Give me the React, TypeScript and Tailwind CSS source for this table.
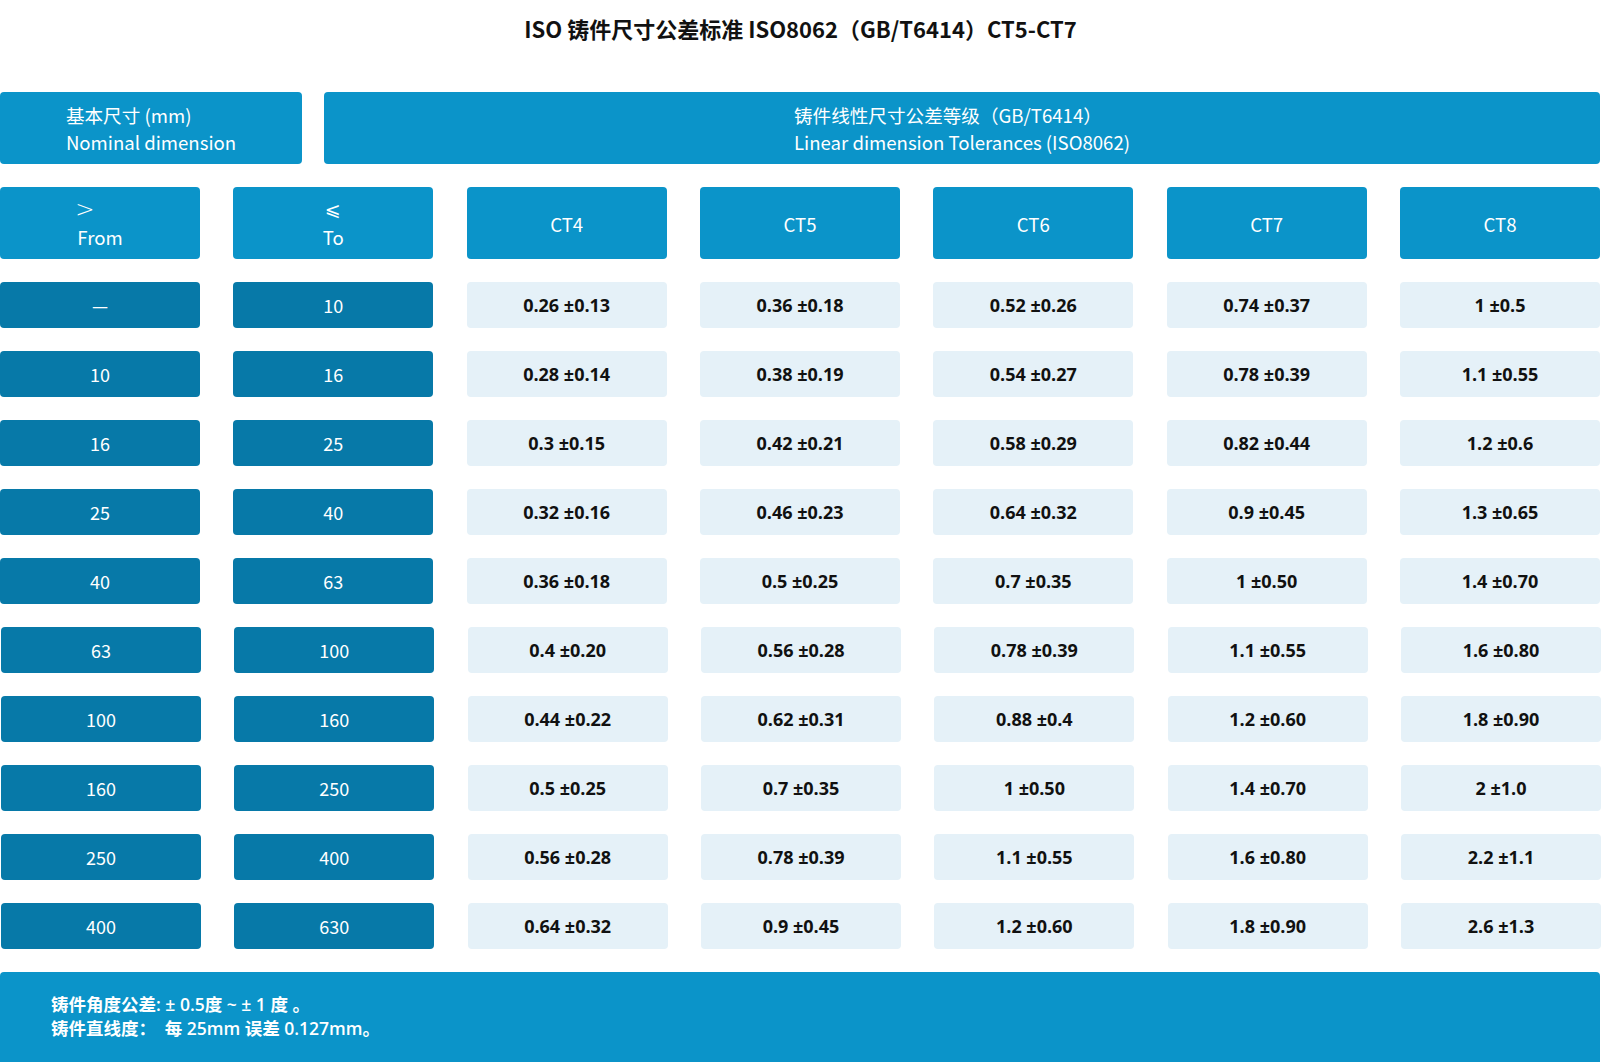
import React from "react";

const rows: [string, string, string[]][] = [
  ["—", "10", ["0.26 ±0.13", "0.36 ±0.18", "0.52 ±0.26", "0.74 ±0.37", "1 ±0.5"]],
  ["10", "16", ["0.28 ±0.14", "0.38 ±0.19", "0.54 ±0.27", "0.78 ±0.39", "1.1 ±0.55"]],
  ["16", "25", ["0.3 ±0.15", "0.42 ±0.21", "0.58 ±0.29", "0.82 ±0.44", "1.2 ±0.6"]],
  ["25", "40", ["0.32 ±0.16", "0.46 ±0.23", "0.64 ±0.32", "0.9 ±0.45", "1.3 ±0.65"]],
  ["40", "63", ["0.36 ±0.18", "0.5 ±0.25", "0.7 ±0.35", "1 ±0.50", "1.4 ±0.70"]],
  ["63", "100", ["0.4 ±0.20", "0.56 ±0.28", "0.78 ±0.39", "1.1 ±0.55", "1.6 ±0.80"]],
  ["100", "160", ["0.44 ±0.22", "0.62 ±0.31", "0.88 ±0.4", "1.2 ±0.60", "1.8 ±0.90"]],
  ["160", "250", ["0.5 ±0.25", "0.7 ±0.35", "1 ±0.50", "1.4 ±0.70", "2 ±1.0"]],
  ["250", "400", ["0.56 ±0.28", "0.78 ±0.39", "1.1 ±0.55", "1.6 ±0.80", "2.2 ±1.1"]],
  ["400", "630", ["0.64 ±0.32", "0.9 ±0.45", "1.2 ±0.60", "1.8 ±0.90", "2.6 ±1.3"]],
];

export default function App() {
  return (
    <div className="w-[1601px] h-[1062px] overflow-hidden bg-white font-['Noto_Sans_CJK_SC',sans-serif]">
      <h1 className="h-[56px] flex items-center justify-center text-[22px] font-bold text-[#111]">
        ISO 铸件尺寸公差标准 ISO8062（GB/T6414）CT5-CT7
      </h1>

      <div className="mt-[36px] w-[1600px] flex gap-[22px] h-[72px] text-white text-[18.6px] leading-[27px]">
        <div className="w-[302px] rounded bg-[#0b94c9] flex items-center justify-center">
          <div className="text-left">
            <div>基本尺寸 (mm)</div>
            <div>Nominal dimension</div>
          </div>
        </div>
        <div className="flex-1 rounded bg-[#0b94c9] flex items-center justify-center">
          <div className="text-left">
            <div>铸件线性尺寸公差等级（GB/T6414）</div>
            <div>Linear dimension Tolerances (ISO8062)</div>
          </div>
        </div>
      </div>

      <div className="mt-[23px] w-[1600px] grid grid-cols-7 gap-x-[33.33px] h-[72px] text-white text-[18.6px] leading-[27px]">
        <div className="rounded bg-[#0b94c9] flex items-center justify-center">
          <div className="text-left">
            <div className="font-['DejaVu_Sans',sans-serif] font-extralight text-[23px] leading-[27px] -ml-[2px]">&gt;</div>
            <div>From</div>
          </div>
        </div>
        <div className="rounded bg-[#0b94c9] flex items-center justify-center">
          <div className="text-left">
            <div className="font-['DejaVu_Sans',sans-serif] text-[19px] leading-[27px] pl-[2px]">⩽</div>
            <div>To</div>
          </div>
        </div>
        {["CT4", "CT5", "CT6", "CT7", "CT8"].map((c) => (
          <div key={c} className="rounded bg-[#0b94c9] flex items-center justify-center">
            {c}
          </div>
        ))}
      </div>

      <div className="mt-[23px] flex flex-col gap-[23px]">
        {rows.map(([from, to, vals], i) => (
          <div
            key={i}
            className={
              "w-[1600px] grid grid-cols-7 gap-x-[33.33px] h-[46px] " +
              (i >= 5 ? "ml-px" : "")
            }
          >
            <div className="rounded bg-[#0779a8] text-white text-[18px] flex items-center justify-center">
              {from}
            </div>
            <div className="rounded bg-[#0779a8] text-white text-[18px] flex items-center justify-center">
              {to}
            </div>
            {vals.map((v, j) => (
              <div
                key={j}
                className="rounded bg-[#e5f1f8] text-[#111] text-[18px] font-bold flex items-center justify-center font-['Open_Sans',sans-serif]"
              >
                {v}
              </div>
            ))}
          </div>
        ))}
      </div>

      <div className="mt-[23px] w-[1600px] h-[110px] rounded bg-[#0b94c9] text-white text-[17.5px] font-semibold leading-[24px] pt-[20px] pl-[51px] font-['Open_Sans','Noto_Sans_CJK_SC',sans-serif]">
        <div>铸件角度公差: ± 0.5度 ~ ± 1 度 。</div>
        <div>铸件直线度：　每 25mm 误差 0.127mm。</div>
      </div>
    </div>
  );
}
